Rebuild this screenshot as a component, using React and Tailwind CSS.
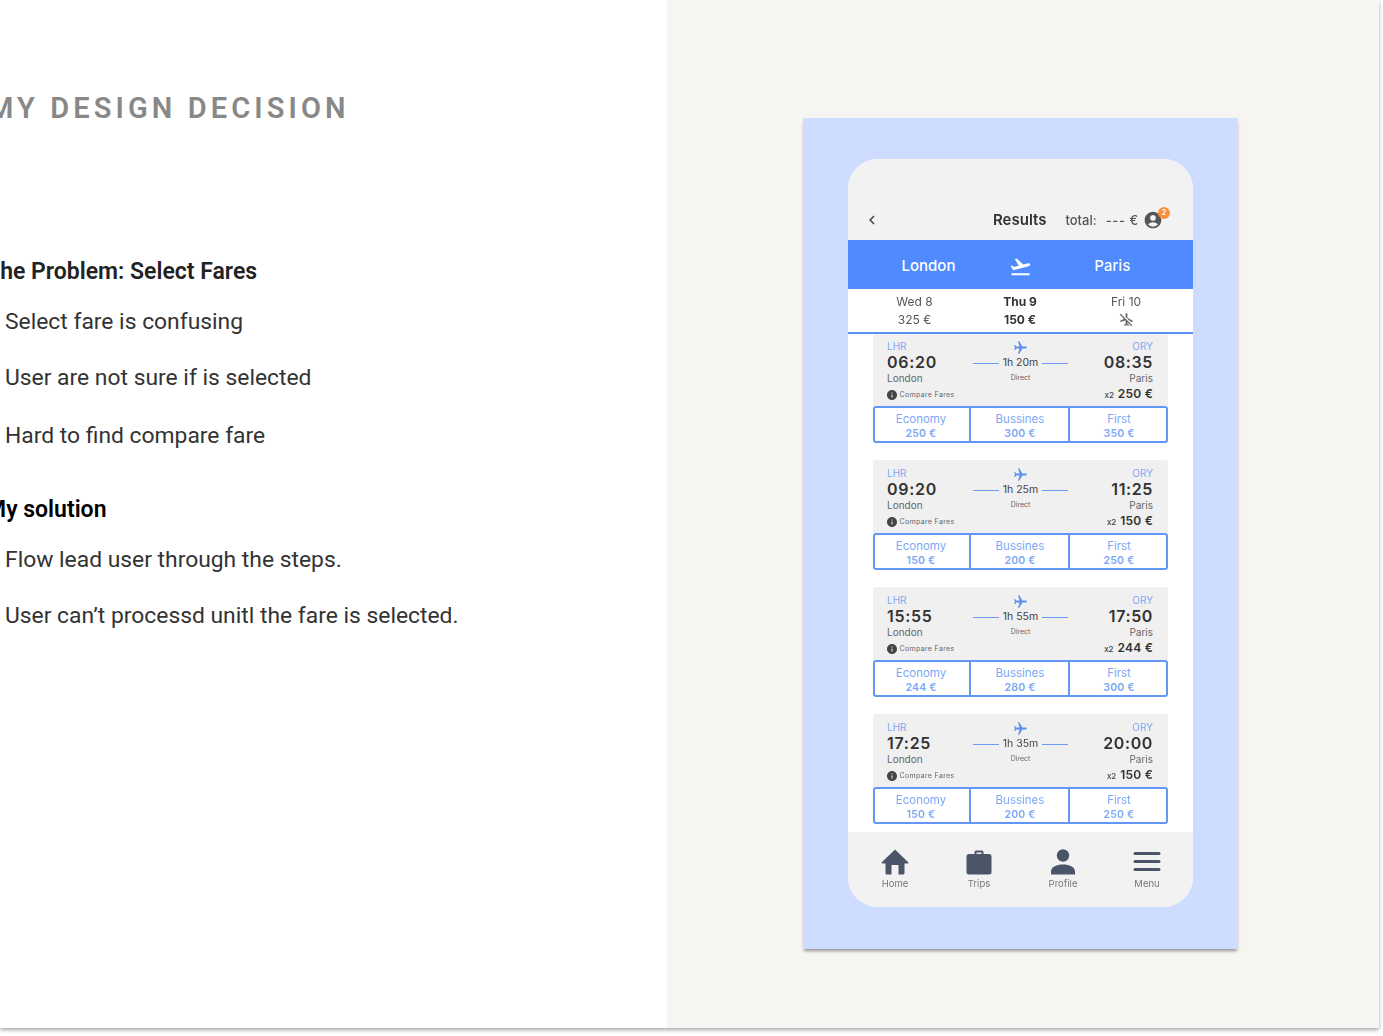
import React from "react";
import { MdFlightTakeoff, MdAccountCircle, MdAirplanemodeInactive, MdInfo, MdLocalAirport, MdChevronLeft } from "react-icons/md";

const flights = [
  { dep: "06:20", arr: "08:35", dur: "1h 20m", price: "250", fares: ["250", "300", "350"] },
  { dep: "09:20", arr: "11:25", dur: "1h 25m", price: "150", fares: ["150", "200", "250"] },
  { dep: "15:55", arr: "17:50", dur: "1h 55m", price: "244", fares: ["244", "280", "300"] },
  { dep: "17:25", arr: "20:00", dur: "1h 35m", price: "150", fares: ["150", "200", "250"] },
];

function Card({ f, first }) {
  return (
    <div className="flex flex-col">
      <div className={`bg-[#f0f0f0] pl-[14px] pr-[15px] flex justify-between rounded-t-[3px] ${first ? "h-[72px] pt-[6px]" : "h-[73px] pt-[7px]"}`}>
        <div className="flex flex-col w-[90px]">
          <span className="text-[10px] leading-[12px] text-[#7da8f5]">LHR</span>
          <span className="text-[16px] leading-[20px] font-semibold tracking-[0.7px] text-[#333]">{f.dep}</span>
          <span className="text-[10px] leading-[13px] text-[#666]">London</span>
          <div className="flex items-center gap-[2px] mt-[4px]">
            <MdInfo className="text-[#444] text-[12px] -ml-[1.5px]" />
            <span className="text-[7px] leading-[12px] text-[#666] tracking-[0.35px]">Compare Fares</span>
          </div>
        </div>
        <div className="flex flex-col items-center w-[100px] pl-[1px]">
          <MdLocalAirport className="text-[#5b8ff0] text-[15px] rotate-90" />
          <div className="flex items-center gap-[4px] mt-[1px]">
            <div className="h-px w-[26px] shrink-0 bg-[#6b9bf5]" />
            <span className="text-[10.5px] leading-[14px] text-[#444] whitespace-nowrap">{f.dur}</span>
            <div className="h-px w-[26px] shrink-0 bg-[#6b9bf5]" />
          </div>
          <span className="text-[7px] leading-[10px] text-[#666] mt-[3px]">Direct</span>
        </div>
        <div className="flex flex-col items-end w-[90px]">
          <span className="text-[10px] leading-[12px] text-[#7da8f5]">ORY</span>
          <span className="text-[16px] leading-[20px] font-semibold tracking-[0.6px] text-[#333]">{f.arr}</span>
          <span className="text-[10px] leading-[13px] text-[#666]">Paris</span>
          <div className="flex items-baseline gap-[4px] mt-[1px]">
            <span className="text-[8px] text-[#444] font-medium">x2</span>
            <span className="text-[12px] leading-[16px] font-semibold text-[#333] tracking-[0.2px]">{f.price} €</span>
          </div>
        </div>
      </div>
      <div className="h-[37px] flex border-2 border-[#6396f5] rounded-[3px] bg-white">
        {["Economy", "Bussines", "First"].map((n, i) => (
          <div key={n} className={`flex flex-col items-center justify-center pt-[3px] ${i === 0 ? "w-[94px] pr-[2px]" : i === 1 ? "w-[101px] border-x-2 border-[#6396f5] pl-[1px]" : "flex-1 pl-[2px]"}`}>
            <span className="text-[11.5px] leading-[15px] text-[#7da8f5]">{n}</span>
            <span className="text-[10.5px] leading-[14px] font-semibold tracking-[0.2px] text-[#7da8f5]">{f.fares[i]} €</span>
          </div>
        ))}
      </div>
    </div>
  );
}

function Tab({ icon, label }) {
  return (
    <div className="flex flex-col items-center w-[48px]">
      <div className="h-[28px] flex items-center justify-center">{icon}</div>
      <span className="text-[9.5px] leading-[12px] text-[#777] mt-[2px]">{label}</span>
    </div>
  );
}

function Phone() {
  return (
    <div className="w-[345px] h-[748px] rounded-[30px] bg-white overflow-hidden flex flex-col blur-[0.4px] font-['Inter',sans-serif]">
      <div className="h-[81px] bg-[#f2f2f2] flex items-end pb-[9px] pl-[17px] relative">
        <MdChevronLeft className="text-[#444] text-[18px] mb-[2px] -ml-[2px]" />
        <span className="ml-[112px] text-[15px] leading-[22px] font-semibold text-[#333]">Results</span>
        <span className="ml-[19px] text-[13px] leading-[22px] font-medium text-[#555]">total:</span>
        <span className="ml-[9px] text-[13px] leading-[22px] font-medium tracking-[0.6px] text-[#555]">--- €</span>
        <MdAccountCircle className="text-[#555] text-[20px] ml-[4px] mb-[1px]" />
        <span className="absolute left-[310px] bottom-[21px] w-[12px] h-[12px] rounded-full bg-[#f7923a] text-white text-[7px] leading-[12px] text-center font-semibold">2</span>
      </div>
      <div className="h-[49px] pt-[3px] bg-[#4f8aff] flex items-center text-white text-[15px] font-medium">
        <span className="w-[161px] text-center">London</span>
        <MdFlightTakeoff className="text-[23px] w-[23px]" />
        <span className="flex-1 text-center">Paris</span>
      </div>
      <div className="h-[45px] bg-white border-b-2 border-[#5b8ff0] flex pt-[4px] text-[12px] leading-[18px] text-[#555]">
        <div className="w-[133px] flex flex-col items-center"><span>Wed 8</span><span>325 €</span></div>
        <div className="w-[78px] flex flex-col items-center font-bold text-[#333]"><span>Thu 9</span><span>150 €</span></div>
        <div className="flex-1 flex flex-col items-center"><span>Fri 10</span><MdAirplanemodeInactive className="text-[#666] text-[15px] mt-px" /></div>
      </div>
      <div className="flex-1 flex flex-col gap-[17px] px-[25px] bg-white">
        {flights.map((f, i) => <Card key={f.dep} f={f} first={i === 0} />)}
      </div>
      <div className="h-[75px] bg-[#f2f2f2] flex items-start justify-between pl-[23px] pr-[22px] pt-[16px]">
        <Tab label="Home" icon={
          <svg width="28" height="26" viewBox="0 0 28 26" fill="#4a5568">
            <path d="M14 0.5 L27.5 13.5 Q27.5 14.5 26.5 14.5 L23.5 14.5 L23.5 24 Q23.5 25.5 22 25.5 L17.5 25.5 L17.5 16 L10.5 16 L10.5 25.5 L6 25.5 Q4.5 25.5 4.5 24 L4.5 14.5 L1.5 14.5 Q0.5 14.5 0.5 13.5 Z" />
          </svg>
        } />
        <Tab label="Trips" icon={
          <svg width="26" height="25" viewBox="0 0 26 25" fill="#4a5568">
            <path fillRule="evenodd" d="M8.5 4 L8.5 2 Q8.5 0.5 10 0.5 L16 0.5 Q17.5 0.5 17.5 2 L17.5 4 L23 4 Q25.5 4 25.5 6.5 L25.5 22 Q25.5 24.5 23 24.5 L3 24.5 Q0.5 24.5 0.5 22 L0.5 6.5 Q0.5 4 3 4 Z M10.5 4 L15.5 4 L15.5 2.5 L10.5 2.5 Z" />
          </svg>
        } />
        <Tab label="Profile" icon={
          <svg width="26" height="26" viewBox="0 0 26 26" fill="#4a5568">
            <circle cx="13" cy="6.5" r="6.2" />
            <path d="M1 25.5 L1 22.5 C1 18 7 15.5 13 15.5 C19 15.5 25 18 25 22.5 L25 25.5 Z" />
          </svg>
        } />
        <Tab label="Menu" icon={
          <svg width="28" height="22" viewBox="0 0 28 22" fill="#4a5568">
            <rect x="0.5" y="1" width="27" height="3" rx="1.5" />
            <rect x="0.5" y="9" width="27" height="3" rx="1.5" />
            <rect x="0.5" y="17" width="27" height="3" rx="1.5" />
          </svg>
        } />
      </div>
    </div>
  );
}

export default function App() {
  return (
    <div className="w-[1383px] h-[1036px] bg-white overflow-hidden font-['Roboto',sans-serif]">
      <div className="w-[1379px] h-[1028px] flex shadow-[0_2px_4px_rgba(0,0,0,0.35)]">
        <div className="w-[667px] bg-white overflow-hidden pt-[90px]">
          <h1 className="text-[29px] leading-[36px] font-semibold tracking-[4.1px] text-[#888] -ml-[12px] whitespace-nowrap">MY DESIGN DECISION</h1>
          <h2 className="mt-[128px] text-[23px] leading-[36px] font-semibold text-[#222] -ml-[14px] whitespace-nowrap">The Problem: Select Fares</h2>
          <ul className="pl-[5px] mt-[14px] text-[22.85px] leading-[36px] text-[#333] flex flex-col whitespace-nowrap">
            <li>Select fare is confusing</li>
            <li className="mt-[20px]">User are not sure if is selected</li>
            <li className="mt-[22px]">Hard to find compare fare</li>
          </ul>
          <h2 className="mt-[38px] text-[23px] leading-[36px] font-semibold text-black -ml-[14px] whitespace-nowrap">My solution</h2>
          <ul className="pl-[5px] mt-[14px] text-[22.85px] leading-[36px] text-[#333] flex flex-col gap-[20px] whitespace-nowrap">
            <li>Flow lead user through the steps.</li>
            <li>User can’t processd unitl the fare is selected.</li>
          </ul>
        </div>
        <div className="flex-1 bg-[#f6f5f1] pl-[136px] pt-[118px]">
          <div className="w-[435px] h-[831px] bg-[#cddcff] shadow-[0_3px_3px_-1px_rgba(0,0,0,0.4)] pl-[45px] pt-[41px]">
            <Phone />
          </div>
        </div>
      </div>
    </div>
  );
}
